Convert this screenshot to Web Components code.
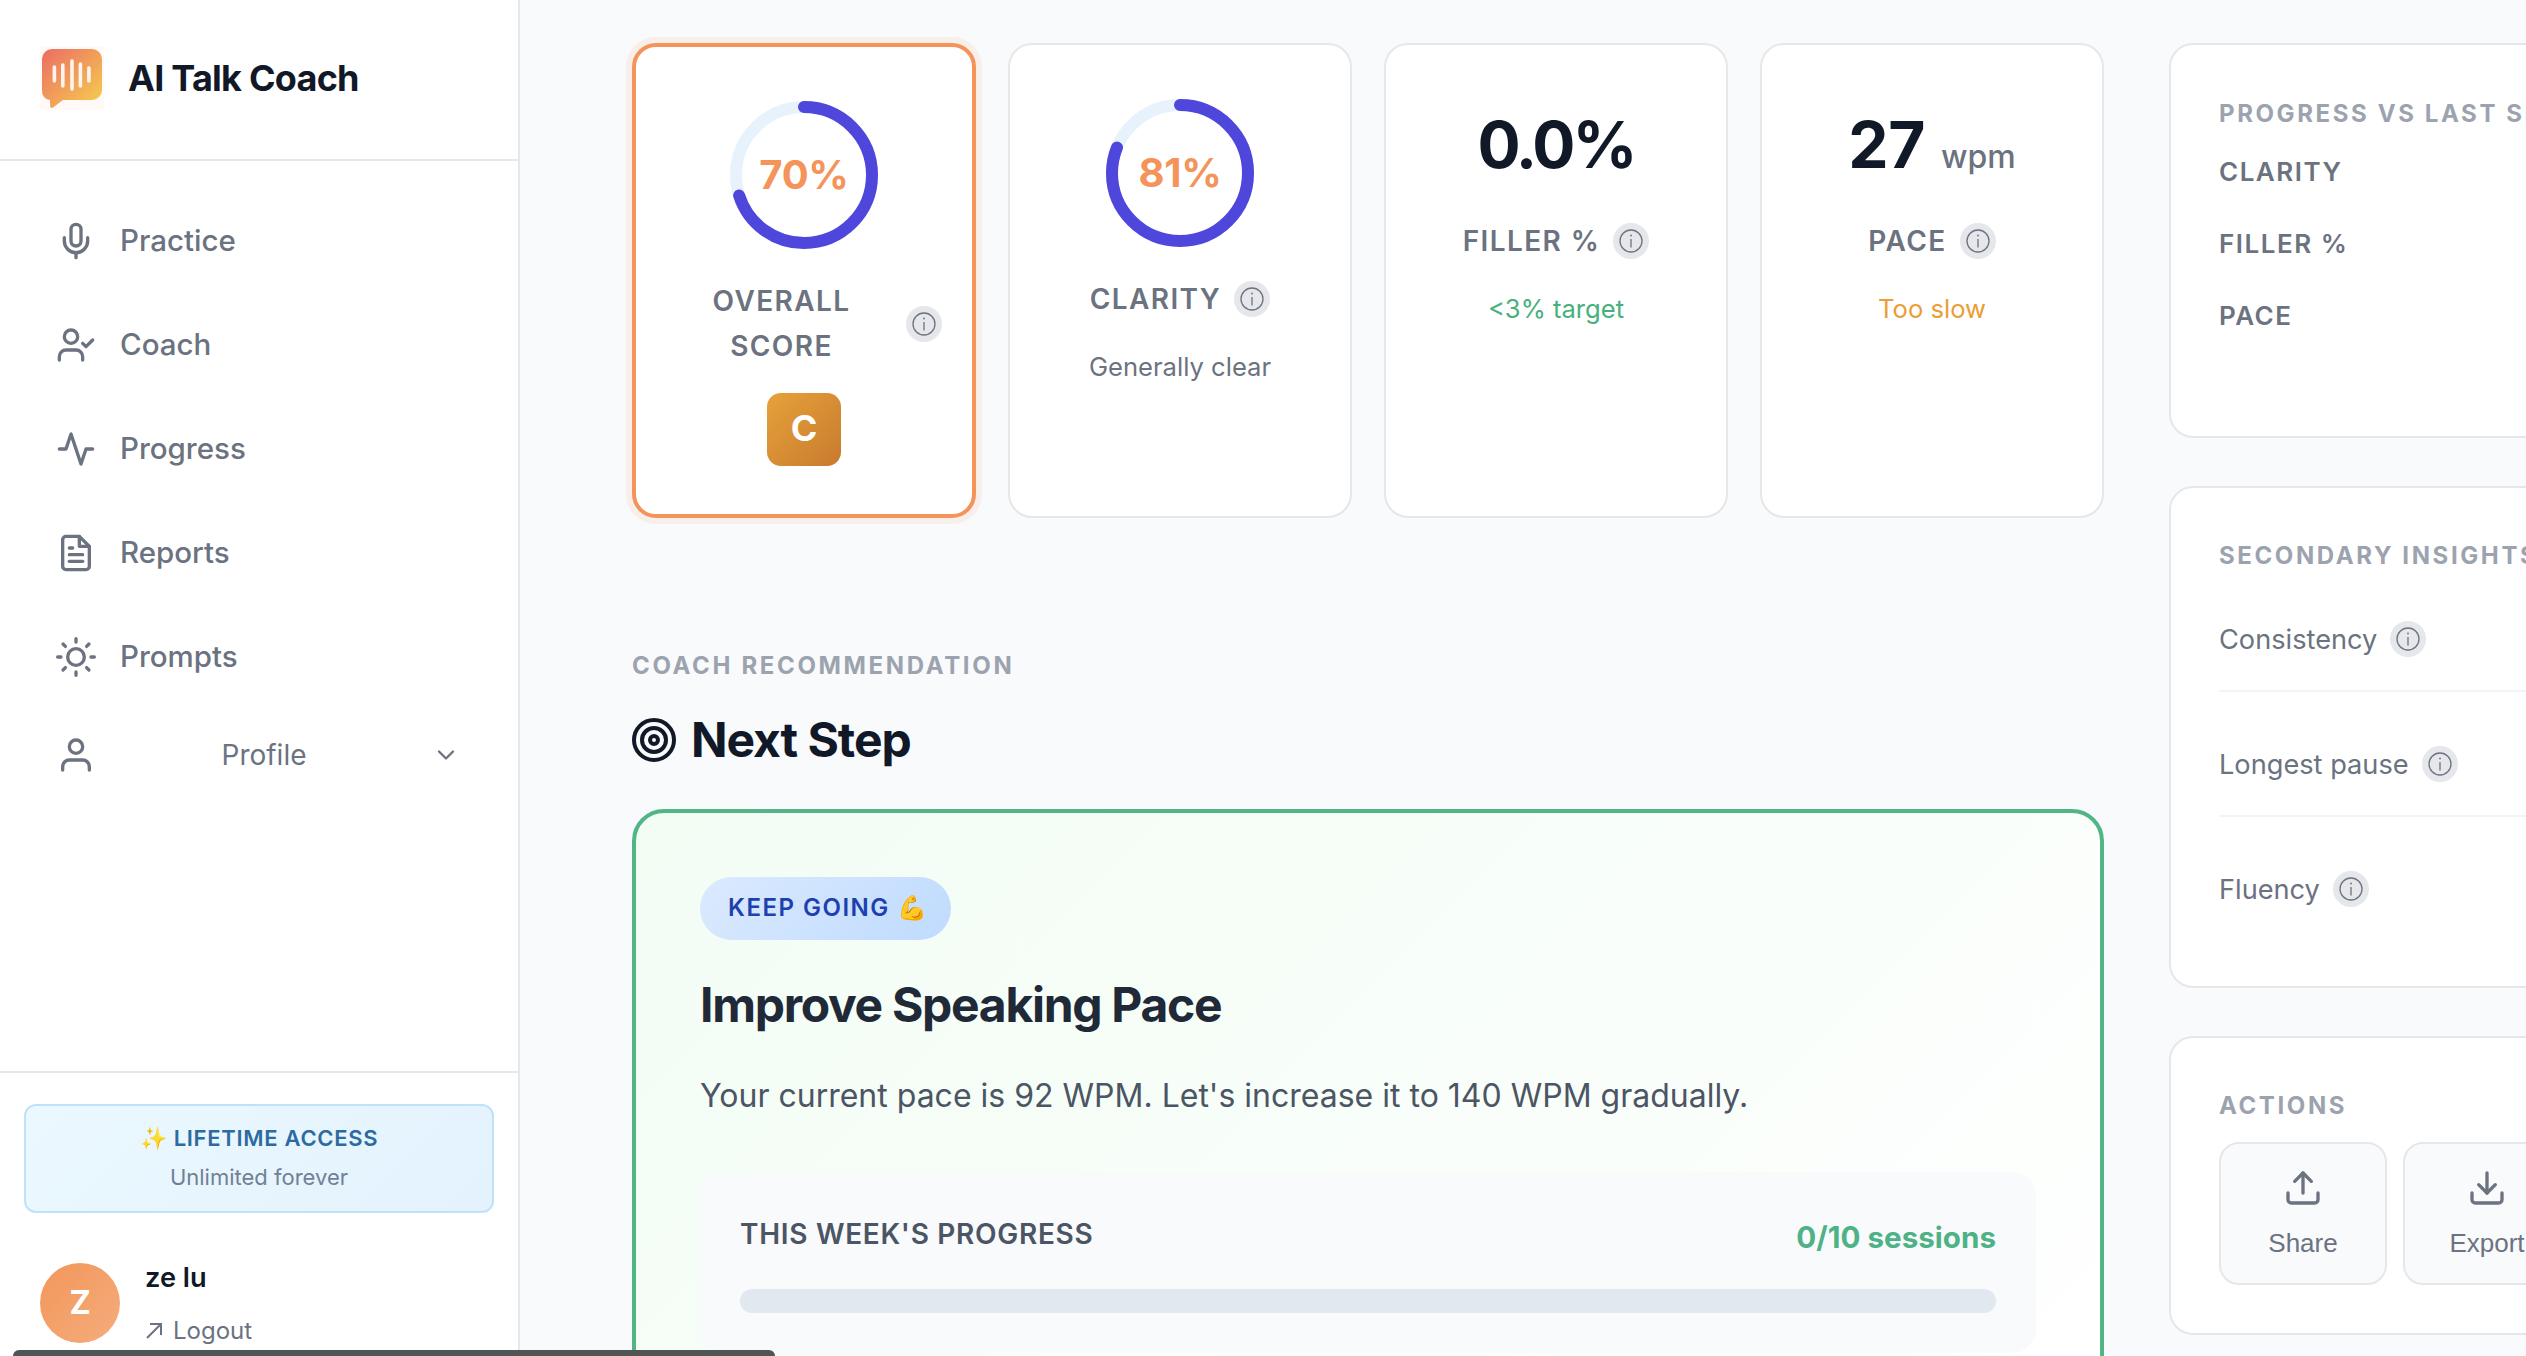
<!DOCTYPE html>
<html lang="en">
<head>
<meta charset="utf-8">
<title>AI Talk Coach</title>
<style>
    html, body { margin: 0; height: 100%; overflow: hidden; }
    body { font-family: Inter, "Noto Sans", sans-serif; line-height: 1.6; background: #f9fafb; color: #111827; }
</style>
</head>
<body>
<app-shell>
    <side-bar slot="side">
        <brand-head>AI Talk Coach</brand-head>
        <nav-item icon="mic">Practice</nav-item>
        <nav-item icon="coach">Coach</nav-item>
        <nav-item icon="activity">Progress</nav-item>
        <nav-item icon="file">Reports</nav-item>
        <nav-item icon="sun">Prompts</nav-item>
        <nav-item icon="user" expand>Profile</nav-item>
        <side-foot slot="foot">
            <plan-card note="Unlimited forever">✨ LIFETIME ACCESS</plan-card>
            <user-chip name="ze lu" initial="Z"></user-chip>
        </side-foot>
    </side-bar>

    <div class="col-left" slot="left">
        <metric-row>
            <metric-card label="OVERALL SCORE" highlight>
                <score-ring slot="top" value="70"></score-ring>
                <grade-badge>C</grade-badge>
            </metric-card>
            <metric-card label="CLARITY">
                <score-ring slot="top" value="81"></score-ring>
                <metric-note>Generally clear</metric-note>
            </metric-card>
            <metric-card label="FILLER %">
                <metric-value slot="top" tight>0.0%</metric-value>
                <metric-note tone="good">&lt;3% target</metric-note>
            </metric-card>
            <metric-card label="PACE">
                <metric-value slot="top" unit="wpm">27</metric-value>
                <metric-note tone="warn">Too slow</metric-note>
            </metric-card>
        </metric-row>
        <next-step eyebrow="COACH RECOMMENDATION" heading="Next Step">
            <step-card badge="KEEP GOING 💪" title="Improve Speaking Pace"
                       text="Your current pace is 92 WPM. Let's increase it to 140 WPM gradually.">
                <week-progress label="THIS WEEK'S PROGRESS" count="0/10 sessions"></week-progress>
            </step-card>
        </next-step>
    </div>

    <div class="col-right" slot="right">
        <side-panel heading="PROGRESS VS LAST SESSION">
            <compare-list>
                <compare-row>CLARITY</compare-row>
                <compare-row>FILLER %</compare-row>
                <compare-row>PACE</compare-row>
            </compare-list>
        </side-panel>
        <side-panel heading="SECONDARY INSIGHTS">
            <insight-row>Consistency</insight-row>
            <insight-row>Longest pause</insight-row>
            <insight-row last>Fluency</insight-row>
        </side-panel>
        <side-panel heading="ACTIONS">
            <action-row>
                <action-button icon="upload">Share</action-button>
                <action-button icon="download">Export</action-button>
            </action-row>
        </side-panel>
    </div>
    <status-strip slot="over"></status-strip>
</app-shell>

<script>
const ICONS = {
    mic: `<path d="M12 2a3 3 0 0 0-3 3v7a3 3 0 0 0 6 0V5a3 3 0 0 0-3-3Z"/><path d="M19 10v2a7 7 0 0 1-14 0v-2"/><line x1="12" y1="19" x2="12" y2="22"/>`,
    coach: `<path d="M16 21v-2a4 4 0 0 0-4-4H6a4 4 0 0 0-4 4v2"/><circle cx="9" cy="7" r="4"/><polyline points="16 11 18 13 22 9"/>`,
    activity: `<path d="M22 12h-4l-3 9L9 3l-3 9H2"/>`,
    file: `<path d="M14 2H6a2 2 0 0 0-2 2v16a2 2 0 0 0 2 2h12a2 2 0 0 0 2-2V8z"/><polyline points="14 2 14 8 20 8"/><line x1="16" y1="13" x2="8" y2="13"/><line x1="16" y1="17" x2="8" y2="17"/><polyline points="10 9 9 9 8 9"/>`,
    sun: `<circle cx="12" cy="12" r="5"/><path d="M12 1v2M12 21v2M4.22 4.22l1.42 1.42M18.36 18.36l1.42 1.42M1 12h2M21 12h2M4.22 19.78l1.42-1.42M18.36 5.64l1.42-1.42"/>`,
    user: `<path d="M20 21v-2a4 4 0 0 0-4-4H8a4 4 0 0 0-4 4v2"/><circle cx="12" cy="7" r="4"/>`,
    upload: `<path d="M21 15v4a2 2 0 0 1-2 2H5a2 2 0 0 1-2-2v-4"/><polyline points="17 8 12 3 7 8"/><line x1="12" y1="3" x2="12" y2="15"/>`,
    download: `<path d="M21 15v4a2 2 0 0 1-2 2H5a2 2 0 0 1-2-2v-4"/><polyline points="7 10 12 15 17 10"/><line x1="12" y1="15" x2="12" y2="3"/>`,
    target: `<circle cx="12" cy="12" r="10"/><circle cx="12" cy="12" r="6"/><circle cx="12" cy="12" r="2"/>`,
    chevron: `<polyline points="6 9 12 15 18 9"/>`
};

function icon(name, size) {
    return `<svg width="${size}" height="${size}" viewBox="0 0 24 24" fill="none" stroke="currentColor" stroke-width="2" stroke-linecap="round" stroke-linejoin="round">${ICONS[name]}</svg>`;
}

// small helper so each element just supplies its shadow markup
class ShadowEl extends HTMLElement {
    constructor() {
        super();
        this.shadowDOM = this.attachShadow({mode: "open"});
    }
    connectedCallback() {
        this.shadowDOM.innerHTML = this.markup();
    }
    attr(name) {
        return this.getAttribute(name) || "";
    }
}

class AppShell extends ShadowEl {
    markup() {
        return `
        <style>
            :host { display: flex; height: 100vh; overflow: hidden; position: relative; }
            main { flex: 1; min-width: 0; overflow: hidden; display: flex; gap: 65px; padding: 43px 0 0 112px; }
            ::slotted([slot="left"]) { flex: none; width: 1472px; }
            ::slotted([slot="right"]) { flex: none; width: 640px; display: flex; flex-direction: column; gap: 48px; }
        </style>
        <slot name="side"></slot>
        <main><slot name="left"></slot><slot name="right"></slot></main>
        <slot name="over"></slot>`;
    }
}

class SideBar extends ShadowEl {
    markup() {
        return `
        <style>
            :host { display: flex; flex-direction: column; flex: none; width: 518px; height: 100%; background: #fff; border-right: 2px solid #e5e7eb; }
            nav { padding-top: 28px; display: flex; flex-direction: column; }
            .foot { margin-top: auto; }
        </style>
        <slot name="head"></slot>
        <nav><slot></slot></nav>
        <div class="foot"><slot name="foot"></slot></div>`;
    }
}

class BrandHead extends ShadowEl {
    connectedCallback() {
        this.slot = "head";
        super.connectedCallback();
    }
    markup() {
        return `
        <style>
            :host { display: flex; align-items: center; gap: 24px; box-sizing: border-box; height: 161px; padding: 0 0 3px 40px; border-bottom: 2px solid #e5e7eb; }
            span { font-size: 36px; font-weight: 700; color: #111827; letter-spacing: -0.75px; padding-top: 2px; }
            svg { display: block; flex: none; }
        </style>
        <svg width="64" height="64" viewBox="0 0 64 64">
            <defs><linearGradient id="g" x1="0" y1="0" x2="1" y2="1">
                <stop offset="0" stop-color="#ec6c64"/><stop offset="1" stop-color="#f6d04e"/>
            </linearGradient></defs>
            <rect width="64" height="64" rx="2" fill="#fffaf7"/>
            <path d="M12 3h40a10 10 0 0 1 10 10v31a10 10 0 0 1-10 10H23l-10 7.5c-1.5 1-2.8.3-2.8-1.2L10 54a8 9 0 0 1-8-10V13A10 10 0 0 1 12 3z" fill="url(#g)"/>
            <g stroke="#fff5ee" stroke-width="3.6" stroke-linecap="round">
                <line x1="14.4" y1="21" x2="14.4" y2="35"/>
                <line x1="22.8" y1="19" x2="22.8" y2="40"/>
                <line x1="32" y1="15" x2="32" y2="43"/>
                <line x1="40.4" y1="18" x2="40.4" y2="40"/>
                <line x1="48.9" y1="22" x2="48.9" y2="35"/>
            </g>
        </svg>
        <span><slot></slot></span>`;
    }
}

class NavItem extends ShadowEl {
    markup() {
        const expand = this.hasAttribute("expand");
        return `
        <style>
            :host { display: flex; align-items: center; gap: 24px; height: ${expand ? 92 : 104}px; padding: 0 58px 0 56px; color: #6b7280; font-size: 29.5px; font-weight: 500; }
            :host([expand]) { justify-content: space-between; gap: 0; font-size: 28px; font-weight: 400; }
            svg { display: block; flex: none; }
        </style>
        ${icon(this.attr("icon"), 40)}
        <span><slot></slot></span>
        ${expand ? icon("chevron", 28) : ""}`;
    }
}

class SideFoot extends ShadowEl {
    markup() {
        return `
        <style>
            :host { display: block; border-top: 2px solid #e5e7eb; padding: 31px 24px 6px; }
        </style>
        <slot></slot>`;
    }
}

class PlanCard extends ShadowEl {
    markup() {
        return `
        <style>
            :host { display: block; box-sizing: border-box; height: 109px; padding-top: 15px; text-align: center; border: 2px solid #bee3f8; border-radius: 12px; background: linear-gradient(135deg, #ebf8ff, #e3f2fd); margin-bottom: 42px; }
            .t { font-size: 22px; font-weight: 600; color: #2c6aa0; letter-spacing: 0.7px; line-height: 35px; }
            .n { font-size: 22px; color: #718096; line-height: 35px; margin-top: 4px; }
        </style>
        <div class="t"><slot></slot></div>
        <div class="n">${this.attr("note")}</div>`;
    }
}

class UserChip extends ShadowEl {
    markup() {
        return `
        <style>
            :host { display: flex; align-items: center; gap: 25px; padding-left: 16px; }
            .av { width: 80px; height: 80px; border-radius: 50%; flex: none; display: flex; align-items: center; justify-content: center; color: #fff; font-size: 32px; font-weight: 700; background: linear-gradient(135deg, #f2965a, #f5ad7c); }
            .name { font-size: 27.2px; font-weight: 600; color: #111827; line-height: 45px; }
            .out { display: flex; align-items: center; gap: 10px; font-size: 24px; color: #6b7280; line-height: 38px; margin-top: 12px; }
            svg { display: block; }
        </style>
        <div class="av">${this.attr("initial")}</div>
        <div>
            <div class="name">${this.attr("name")}</div>
            <div class="out">
                <svg width="18" height="18" viewBox="0 0 18 18" fill="none" stroke="currentColor" stroke-width="2"><path d="M2 16 16 2M5 2h11v11"/></svg>
                Logout
            </div>
        </div>`;
    }
}

class MetricRow extends ShadowEl {
    markup() {
        return `
        <style>
            :host { display: grid; grid-template-columns: repeat(4, 1fr); gap: 32px; }
        </style>
        <slot></slot>`;
    }
}

class InfoDot extends ShadowEl {
    markup() {
        return `
        <style>
            :host { display: flex; flex: none; width: 36px; height: 36px; border-radius: 50%; background: #e5e7eb; align-items: center; justify-content: center; }
            svg { display: block; }
        </style>
        <svg width="24" height="24" viewBox="0 0 24 24" fill="none" stroke="#6b7280" stroke-width="1.3">
            <circle cx="12" cy="12" r="11"/>
            <line x1="12" y1="10" x2="12" y2="18.5"/>
            <circle cx="12" cy="6.5" r="0.9" fill="#6b7280" stroke="none"/>
        </svg>`;
    }
}

class MetricCard extends ShadowEl {
    markup() {
        return `
        <style>
            :host { display: flex; flex-direction: column; align-items: center; box-sizing: border-box; height: 475px; padding: 54px 30px 0; background: #fff; border: 2px solid #e5e7eb; border-radius: 24px; }
            :host([highlight]) { border: 4px solid #f4945a; box-shadow: 0 0 0 6px rgba(244, 148, 90, 0.1); }
            .label { display: flex; align-items: center; justify-content: center; gap: 13px; width: 100%; margin-bottom: 24px; font-size: 28px; font-weight: 600; letter-spacing: 1.4px; color: #6b7280; text-align: center; }
            :host([highlight]) .label { gap: 9px; }
        </style>
        <slot name="top"></slot>
        <div class="label"><span>${this.attr("label")}</span><info-dot></info-dot></div>
        <slot></slot>`;
    }
}

class ScoreRing extends ShadowEl {
    markup() {
        const r = 68;
        const len = 2 * Math.PI * r;
        const on = len * Number(this.attr("value")) / 100;
        return `
        <style>
            :host { display: block; position: relative; width: 148px; height: 148px; margin-bottom: 30px; }
            svg { display: block; transform: rotate(-90deg); }
            span { position: absolute; inset: 0; display: flex; align-items: center; justify-content: center; font-size: 40px; font-weight: 700; letter-spacing: -0.3px; color: #f4945a; }
        </style>
        <svg width="148" height="148" viewBox="0 0 148 148" fill="none" stroke-width="12">
            <circle cx="74" cy="74" r="${r}" stroke="#e8f2fd"/>
            <circle cx="74" cy="74" r="${r}" stroke="#4f46dc" stroke-linecap="round" stroke-dasharray="${on} ${len}"/>
        </svg>
        <span>${this.attr("value")}%</span>`;
    }
}

class GradeBadge extends ShadowEl {
    markup() {
        return `
        <style>
            :host { display: flex; align-items: center; justify-content: center; width: 74px; height: 73px; border-radius: 14px; color: #fff; font-size: 36px; font-weight: 700; background: linear-gradient(135deg, #e6a23a, #c87a2e); }
        </style>
        <slot></slot>`;
    }
}

class MetricValue extends ShadowEl {
    markup() {
        const unit = this.attr("unit");
        return `
        <style>
            :host { display: block; height: 92px; font-size: 64px; font-weight: 700; line-height: 92px; color: #111827; margin-bottom: 28px; letter-spacing: -0.5px; white-space: nowrap; }
            :host([tight]) { letter-spacing: -3px; }
            span { font-size: 32px; font-weight: 500; color: #6b7280; margin-left: 16px; letter-spacing: 0; }
        </style>
        <slot></slot>${unit ? `<span>${unit}</span>` : ""}`;
    }
}

class MetricNote extends ShadowEl {
    markup() {
        const colors = {good: "#48b07c", warn: "#eb9d36"};
        return `
        <style>
            :host { display: block; font-size: 25.6px; line-height: 42px; color: ${colors[this.attr("tone")] || "#6b7280"}; }
        </style>
        <slot></slot>`;
    }
}

class NextStep extends ShadowEl {
    markup() {
        return `
        <style>
            :host { display: block; margin-top: 129px; }
            .eyebrow { font-size: 24px; font-weight: 700; letter-spacing: 2.65px; color: #9ca3af; }
            h2 { display: flex; align-items: center; gap: 13px; margin: 26px 0 40px; font-size: 48px; font-weight: 700; line-height: 58px; color: #111827; letter-spacing: -1.05px; }
            svg { display: block; margin-left: -2px; }
        </style>
        <div class="eyebrow">${this.attr("eyebrow")}</div>
        <h2>${icon("target", 48)}${this.attr("heading")}</h2>
        <slot></slot>`;
    }
}

class StepCard extends ShadowEl {
    markup() {
        return `
        <style>
            :host { display: block; box-sizing: border-box; height: 700px; padding: 64px; background: linear-gradient(135deg, #f2fdf4, #ffffff); border: 4px solid #52b586; border-radius: 32px; }
            .badge { display: inline-block; padding: 12px 22px 12px 28px; border-radius: 32px; font-size: 24px; font-weight: 600; letter-spacing: 1.5px; color: #1e40af; background: linear-gradient(135deg, #dbeafe, #bfdbfe); }
            h3 { margin: 36px 0 33px; font-size: 48px; font-weight: 700; line-height: 58px; color: #1f2937; letter-spacing: -1.3px; }
            p { margin: 0 0 47px; font-size: 32px; line-height: 58px; color: #4b5563; }
        </style>
        <span class="badge">${this.attr("badge")}</span>
        <h3>${this.attr("title")}</h3>
        <p>${this.attr("text")}</p>
        <slot></slot>`;
    }
}

class WeekProgress extends ShadowEl {
    markup() {
        return `
        <style>
            :host { display: block; padding: 40px; background: #f9fafc; border-radius: 24px; }
            .row { display: flex; justify-content: space-between; align-items: flex-start; margin-bottom: 26px; }
            .l { font-size: 28px; font-weight: 600; letter-spacing: 0.7px; color: #4b5563; }
            .c { font-size: 29.6px; line-height: 51px; font-weight: 700; color: #4fb286; }
            .bar { height: 24px; border-radius: 12px; background: #e2e8f0; }
        </style>
        <div class="row"><span class="l">${this.attr("label")}</span><span class="c">${this.attr("count")}</span></div>
        <div class="bar"></div>`;
    }
}

class SidePanel extends ShadowEl {
    markup() {
        return `
        <style>
            :host { display: block; padding: 48px; background: #fff; border: 2px solid #e5e7eb; border-radius: 24px; }
            .h { font-size: 24px; font-weight: 700; letter-spacing: 2.6px; color: #9ca3af; margin: 1.5px 0 16px; white-space: nowrap; }
        </style>
        <div class="h">${this.attr("heading")}</div>
        <slot></slot>`;
    }
}

class CompareList extends ShadowEl {
    markup() {
        return `
        <style>
            :host { display: flex; flex-direction: column; gap: 30.4px; padding: 2.5px 0 50.9px; }
        </style>
        <slot></slot>`;
    }
}

class CompareRow extends ShadowEl {
    markup() {
        return `
        <style>
            :host { display: block; font-size: 26px; font-weight: 600; letter-spacing: 1.5px; color: #6b7280; }
        </style>
        <slot></slot>`;
    }
}

class InsightRow extends ShadowEl {
    markup() {
        return `
        <style>
            :host { display: flex; align-items: center; gap: 13px; padding: 28px 0; border-bottom: 2px solid #f3f4f6; margin-bottom: 22px; font-size: 27.2px; line-height: 45px; color: #6b7280; }
            :host(:first-of-type) { margin-top: -3px; }
            :host([last]) { border-bottom: 0; margin-bottom: 0; padding-bottom: 26px; }
        </style>
        <span><slot></slot></span><info-dot></info-dot>`;
    }
}

class ActionRow extends ShadowEl {
    markup() {
        return `
        <style>
            :host { display: flex; gap: 16px; }
        </style>
        <slot></slot>`;
    }
}

class ActionButton extends ShadowEl {
    markup() {
        return `
        <style>
            :host { display: flex; flex-direction: column; align-items: center; flex: none; box-sizing: border-box; width: 168px; height: 143px; padding-top: 24px; gap: 15px; background: #f9fafb; border: 2px solid #e5e7eb; border-radius: 20px; color: #6b7280; font: 26px/40px "Liberation Sans", Arial, sans-serif; }
            svg { display: block; }
        </style>
        ${icon(this.attr("icon"), 40)}
        <span><slot></slot></span>`;
    }
}

class StatusStrip extends ShadowEl {
    markup() {
        return `
        <style>
            :host { position: absolute; left: 13px; bottom: 0; width: 762px; height: 6px; background: #4f5553; border-radius: 8px 8px 0 0; }
        </style>`;
    }
}

customElements.define("app-shell", AppShell);
customElements.define("side-bar", SideBar);
customElements.define("brand-head", BrandHead);
customElements.define("nav-item", NavItem);
customElements.define("side-foot", SideFoot);
customElements.define("plan-card", PlanCard);
customElements.define("user-chip", UserChip);
customElements.define("metric-row", MetricRow);
customElements.define("info-dot", InfoDot);
customElements.define("metric-card", MetricCard);
customElements.define("score-ring", ScoreRing);
customElements.define("grade-badge", GradeBadge);
customElements.define("metric-value", MetricValue);
customElements.define("metric-note", MetricNote);
customElements.define("next-step", NextStep);
customElements.define("step-card", StepCard);
customElements.define("week-progress", WeekProgress);
customElements.define("side-panel", SidePanel);
customElements.define("compare-list", CompareList);
customElements.define("compare-row", CompareRow);
customElements.define("insight-row", InsightRow);
customElements.define("action-row", ActionRow);
customElements.define("action-button", ActionButton);
customElements.define("status-strip", StatusStrip);
</script>
</body>
</html>
